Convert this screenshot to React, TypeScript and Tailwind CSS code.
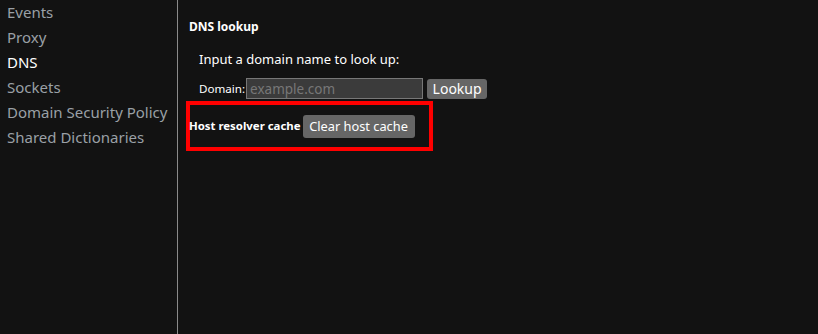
import React from "react";

const NAV_ITEMS = ["Events", "Proxy", "DNS", "Sockets", "Domain Security Policy", "Shared Dictionaries"];

export default function App() {
  return (
    <div
      className="flex h-[334px] w-full bg-[#121212] text-white"
      style={{ fontFamily: '"Noto Sans", "Open Sans", sans-serif' }}
    >
      {/* left nav */}
      <div className="w-[178px] shrink-0 border-r border-[#8a8a8a] pl-[7px]">
        {NAV_ITEMS.map((item) => (
          <div
            key={item}
            className={`h-[25px] text-[15px] leading-[25px] whitespace-nowrap ${
              item === "DNS" ? "text-white" : "text-[#9aa0a6]"
            }`}
          >
            {item}
          </div>
        ))}
      </div>

      {/* content */}
      <div className="flex-1 pl-[11px] pt-[18px]">
        <div className="text-[12px] font-bold leading-[18px]">DNS lookup</div>
        <div className="pl-[10px] pt-[14px]">
          <div className="text-[13px] leading-[18px]">Input a domain name to look up:</div>
          <div className="mt-[10px] flex items-center text-[11.6px]">
            <span>Domain:</span>
            <input
              placeholder="example.com"
              className="ml-[1px] h-[21px] w-[177px] border border-[#777] bg-[#3b3b3b] px-[3px] text-[13.5px] text-white outline-none placeholder:text-[#777]"
            />
            <button className="ml-[4px] h-[20px] w-[60px] rounded-[3px] bg-[#666] text-[14px] leading-[20px] text-white">
              Lookup
            </button>
          </div>
        </div>
        <div className="-ml-[3px] mt-[2px] flex h-[50px] w-[247px] items-center border-4 border-[#ff0000]">
          <span className="-ml-[1px] text-[11.4px] font-bold whitespace-nowrap">Host resolver cache</span>
          <button className="ml-[2px] h-[23px] w-[112px] rounded-[3px] bg-[#666] text-[12.8px] leading-[23px] text-white whitespace-nowrap">
            Clear host cache
          </button>
        </div>
      </div>
    </div>
  );
}
